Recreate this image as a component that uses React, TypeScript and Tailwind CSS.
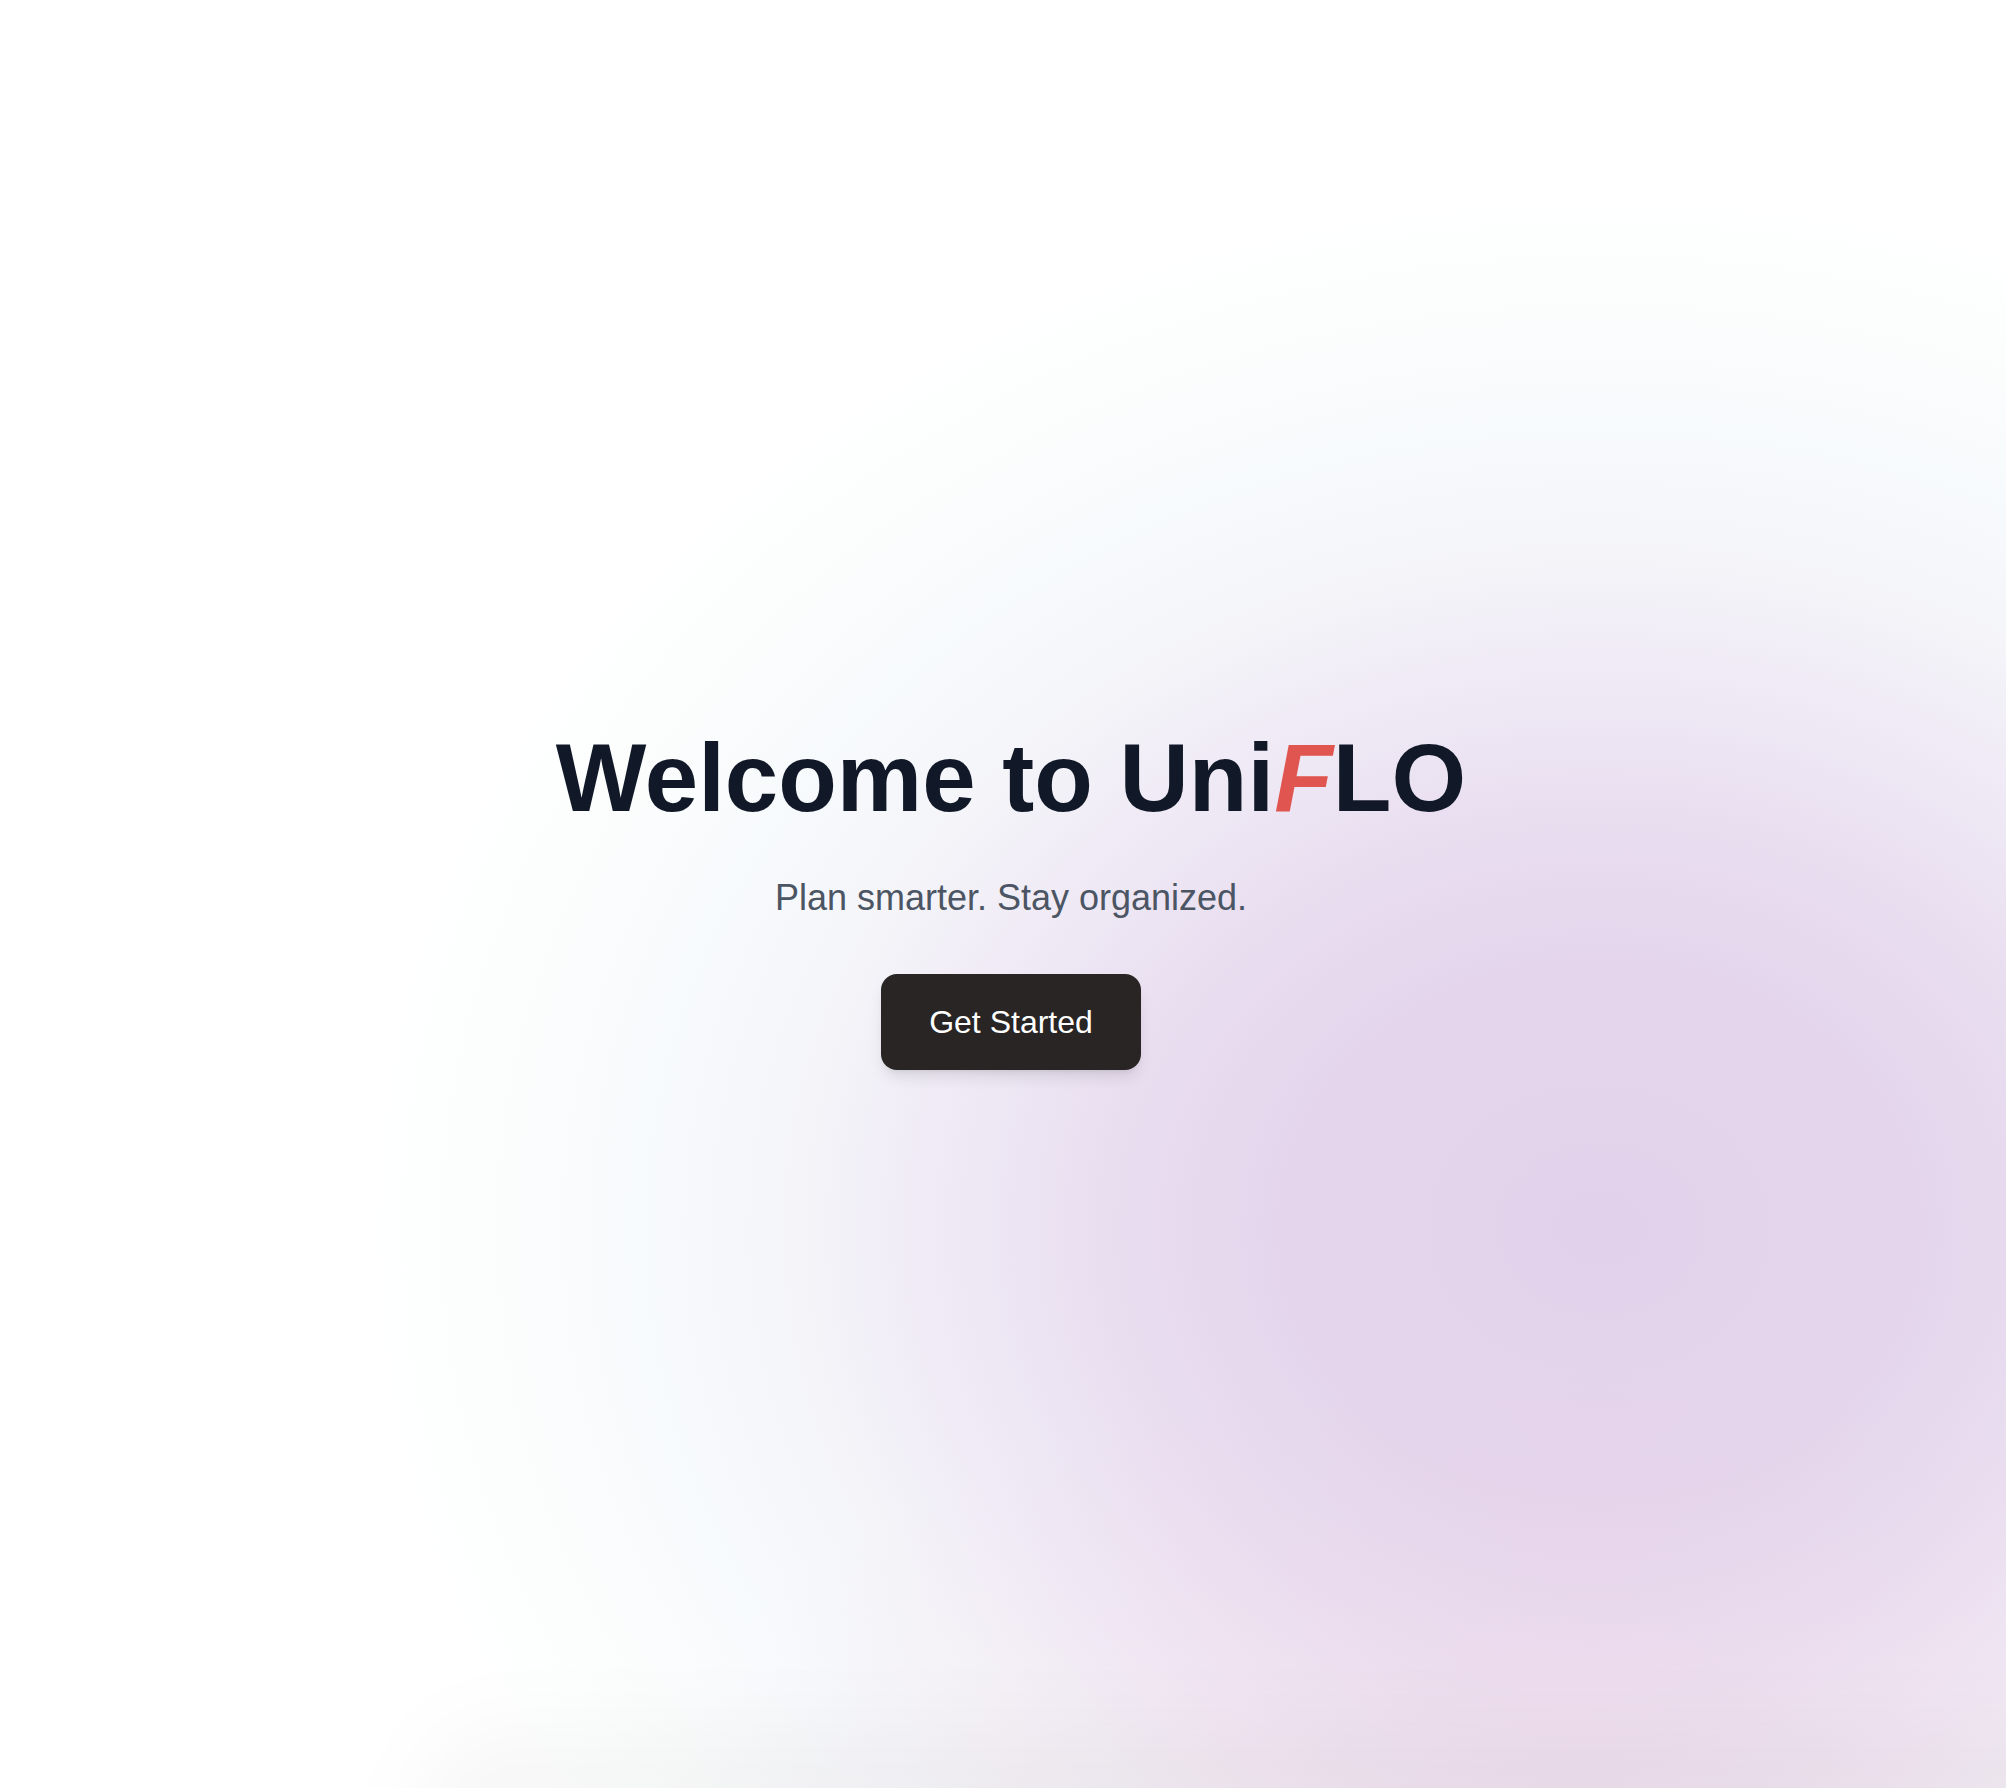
import React from "react";

export default function App() {
  return (
    <div className="relative min-h-screen w-full overflow-hidden bg-white" style={{ fontFamily: '"Liberation Sans", Arial, sans-serif' }}>
      {/* background glow */}
      <div className="pointer-events-none absolute inset-0 bg-[radial-gradient(ellipse_1250px_1050px_at_1600px_1230px,#e2d1ea_0%,#e4d5ec_25%,#e9def0_40%,#efe9f5_52%,#f4f4f9_64%,#f7fafc_76%,#fbfdfd_88%,#ffffff_100%)]" />
      <div className="pointer-events-none absolute inset-0 bg-[radial-gradient(ellipse_900px_450px_at_1550px_1820px,rgba(240,205,225,0.35),rgba(240,205,225,0)_100%)]" />
      <div className="pointer-events-none absolute left-[420px] right-[-300px] bottom-[-100px] h-[160px] rounded-full bg-[rgba(0,0,0,0.03)] blur-2xl" />

      <div className="relative flex min-h-screen flex-col items-center justify-center pl-4 pt-[11px]">
        <h1 className="mb-[52px] text-[96px] font-bold leading-none text-[#111827]">
          Welcome to Uni<span className="italic text-[#e05550]">F</span>LO
        </h1>
        <p className="mb-14 text-4xl leading-10 text-[#4b5563]">Plan smarter. Stay organized.</p>
        <button className="rounded-2xl bg-[#292524] px-12 py-6 text-[32px] leading-[48px] text-white shadow-lg">
          Get Started
        </button>
      </div>
    </div>
  );
}
